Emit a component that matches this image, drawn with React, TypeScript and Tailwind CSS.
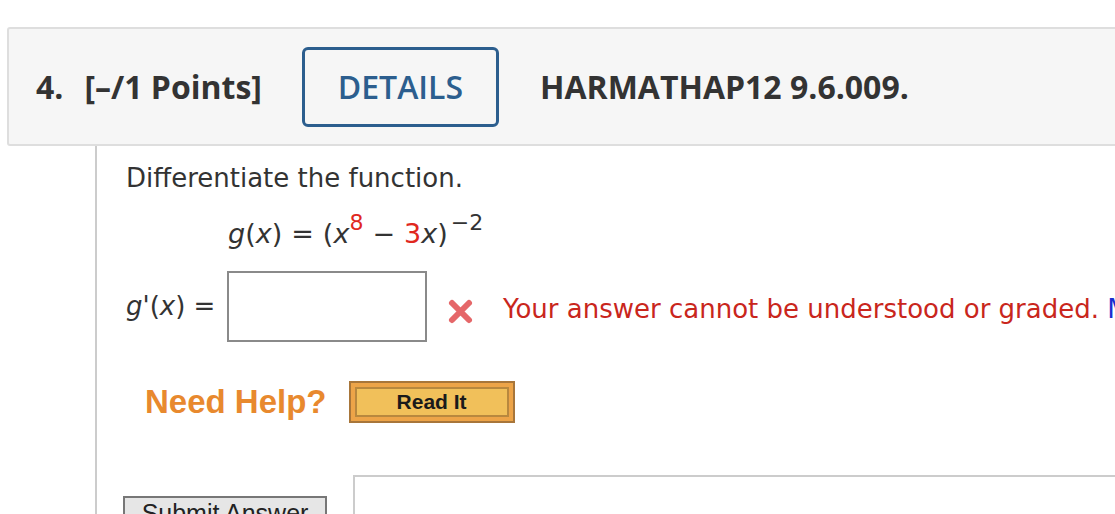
export default function App() {
  return (
    <div className="h-[514px] w-[1115px] overflow-hidden bg-white">
      {/* question header */}
      <div className="ml-[7px] mt-[27px] flex h-[119px] w-[1200px] items-center rounded-[3px] border-2 border-[#dedede] bg-[#f6f6f6] font-['Open_Sans',sans-serif] text-[32px] font-bold text-[#333]">
        <span className="ml-[27px]">4.</span>
        <span className="ml-[21px]">[–/1 Points]</span>
        <button className="ml-[40px] flex h-[80px] w-[197px] shrink-0 items-center justify-center rounded-[6px] border-[3px] border-[#2c5e8e] bg-[#f6f6f6] font-semibold text-[#2c5e8e]">
          DETAILS
        </button>
        <span className="ml-[41px]">HARMATHAP12 9.6.009.</span>
      </div>

      {/* question body */}
      <div className="ml-[95px] h-[400px] border-l-2 border-[#cccccc] pl-[29px] font-['DejaVu_Sans',sans-serif] text-[26px] text-[#333]">
        <p className="pt-[17px] leading-[30px]">Differentiate the function.</p>

        <p className="ml-[102px] mt-[26px] whitespace-nowrap text-[27px] leading-[30px]">
          <i>g</i>(<i>x</i>)<span className="mx-[9px]">=</span>(<i>x</i>
          <sup className="relative top-[-13px] text-[22px] text-[#e0281e]">8</sup>
          <span className="mx-[9px]">−</span>
          <span className="text-[#e0281e]">3</span>
          <i>x</i>)<sup className="relative top-[-13px] ml-[3px] text-[22px]">−2</sup>
        </p>

        <div className="mt-[22px] flex items-center">
          <span className="w-[101px] shrink-0 whitespace-nowrap">
            <i>g</i>'(<i>x</i>) =
          </span>
          <div className="h-[71px] w-[200px] shrink-0 border-2 border-[#8a8a8a] bg-white" />
          <svg className="ml-[20px] mt-[10px] shrink-0" width="27" height="27" viewBox="0 0 27 27">
            <path
              d="M5 5 L22 22 M22 5 L5 22"
              stroke="#e35b5d"
              strokeWidth="6"
              strokeLinecap="round"
              opacity="0.92"
            />
          </svg>
          <span className="ml-[29px] mt-[6px] shrink-0 whitespace-nowrap text-[#c9261c]">
            Your answer cannot be understood or graded.{" "}
            <span className="text-[#1a2fd0]">More Information</span>
          </span>
        </div>

        <div className="mt-[39px] flex items-center">
          <span className="ml-[19px] font-['Liberation_Sans',sans-serif] text-[33px] font-bold leading-[42px] text-[#e8892e]">
            Need Help?
          </span>
          <button className="ml-[22px] flex h-[42px] w-[166px] items-center justify-center border-2 border-[#a8763a] bg-[#eda448] p-[4px]">
            <span className="flex h-full w-full items-center justify-center border-2 border-[#b8883e] bg-[#f1c05a] font-['Liberation_Sans',sans-serif] text-[21px] font-bold text-[#1a1a1a]">
              Read It
            </span>
          </button>
        </div>

        <div className="mt-[52px] flex items-start">
          <button className="ml-[-3px] mt-[21px] h-[34px] w-[204px] shrink-0 border-2 border-[#777] bg-[#e6e6e6] font-['Liberation_Sans',sans-serif] text-[25px] leading-[30px] text-[#222]">
            Submit Answer
          </button>
          <div className="ml-[26px] h-[60px] w-[800px] shrink-0 border-2 border-[#cccccc]" />
        </div>
      </div>
    </div>
  );
}
